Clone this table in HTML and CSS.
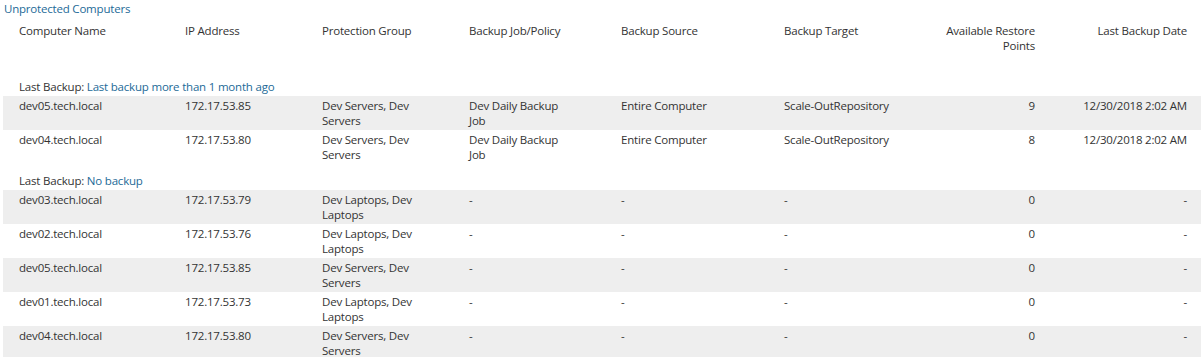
FILE: index.html
```html
<!DOCTYPE html>
<html>
<head>
<meta charset="utf-8">
<link rel="stylesheet" href="styles.css">
</head>
<body>
<div class="title">Unprotected Computers</div>
<div class="grid head">
  <div>Computer Name</div>
  <div>IP Address</div>
  <div>Protection Group</div>
  <div>Backup Job/Policy</div>
  <div>Backup Source</div>
  <div>Backup Target</div>
  <div class="r pts">Available Restore Points</div>
  <div class="r">Last Backup Date</div>
</div>

<div class="group first">Last Backup: <span class="link">Last backup more than 1 month ago</span></div>
<div class="grid row alt">
  <div>dev05.tech.local</div>
  <div>172.17.53.85</div>
  <div><span class="pg">Dev Servers, Dev Servers</span></div>
  <div><span class="job">Dev Daily Backup Job</span></div>
  <div>Entire Computer</div>
  <div>Scale-OutRepository</div>
  <div class="r">9</div>
  <div class="r">12/30/2018 2:02 AM</div>
</div>
<div class="grid row">
  <div>dev04.tech.local</div>
  <div>172.17.53.80</div>
  <div><span class="pg">Dev Servers, Dev Servers</span></div>
  <div><span class="job">Dev Daily Backup Job</span></div>
  <div>Entire Computer</div>
  <div>Scale-OutRepository</div>
  <div class="r">8</div>
  <div class="r">12/30/2018 2:02 AM</div>
</div>

<div class="group">Last Backup: <span class="link">No backup</span></div>
<div class="grid row alt">
  <div>dev03.tech.local</div>
  <div>172.17.53.79</div>
  <div><span class="pg">Dev Laptops, Dev Laptops</span></div>
  <div>-</div>
  <div>-</div>
  <div>-</div>
  <div class="r">0</div>
  <div class="r">-</div>
</div>
<div class="grid row">
  <div>dev02.tech.local</div>
  <div>172.17.53.76</div>
  <div><span class="pg">Dev Laptops, Dev Laptops</span></div>
  <div>-</div>
  <div>-</div>
  <div>-</div>
  <div class="r">0</div>
  <div class="r">-</div>
</div>
<div class="grid row alt">
  <div>dev05.tech.local</div>
  <div>172.17.53.85</div>
  <div><span class="pg">Dev Servers, Dev Servers</span></div>
  <div>-</div>
  <div>-</div>
  <div>-</div>
  <div class="r">0</div>
  <div class="r">-</div>
</div>
<div class="grid row">
  <div>dev01.tech.local</div>
  <div>172.17.53.73</div>
  <div><span class="pg">Dev Laptops, Dev Laptops</span></div>
  <div>-</div>
  <div>-</div>
  <div>-</div>
  <div class="r">0</div>
  <div class="r">-</div>
</div>
<div class="grid row alt">
  <div>dev04.tech.local</div>
  <div>172.17.53.80</div>
  <div><span class="pg">Dev Servers, Dev Servers</span></div>
  <div>-</div>
  <div>-</div>
  <div>-</div>
  <div class="r">0</div>
  <div class="r">-</div>
</div>
</body>
</html>
```

FILE: styles.css
```css
body {
  margin: 0;
  font-family: "Segoe UI", "Open Sans", sans-serif;
  font-size: 11.5px;
  letter-spacing: -0.2px;
  line-height: 15px;
  color: #333333;
  background: #ffffff;
}

.title {
  padding: 1px 0 0 4px;
  line-height: 15px;
  color: #236a97;
}

.grid {
  display: grid;
  grid-template-columns: 166px 137px 147px 152px 163px 121px 130px 152px;
  margin-left: 3px;
  padding: 2px 14px 2px 16px;
}

.head {
  margin-top: 4px;
  padding-top: 3px;
  padding-bottom: 1px;
}

.pts {
  padding-left: 24px;
}

.row {
  height: 34px;
  box-sizing: border-box;
}

.row.alt {
  background: #eeeeee;
}

.group {
  margin-left: 3px;
  padding: 9px 0 2px 16px;
}

.group.first {
  padding-top: 25px;
}

.link {
  color: #236a97;
}

.r {
  text-align: right;
}

.pg {
  display: block;
  max-width: 110px;
}

.job {
  display: block;
  max-width: 104px;
}
```
